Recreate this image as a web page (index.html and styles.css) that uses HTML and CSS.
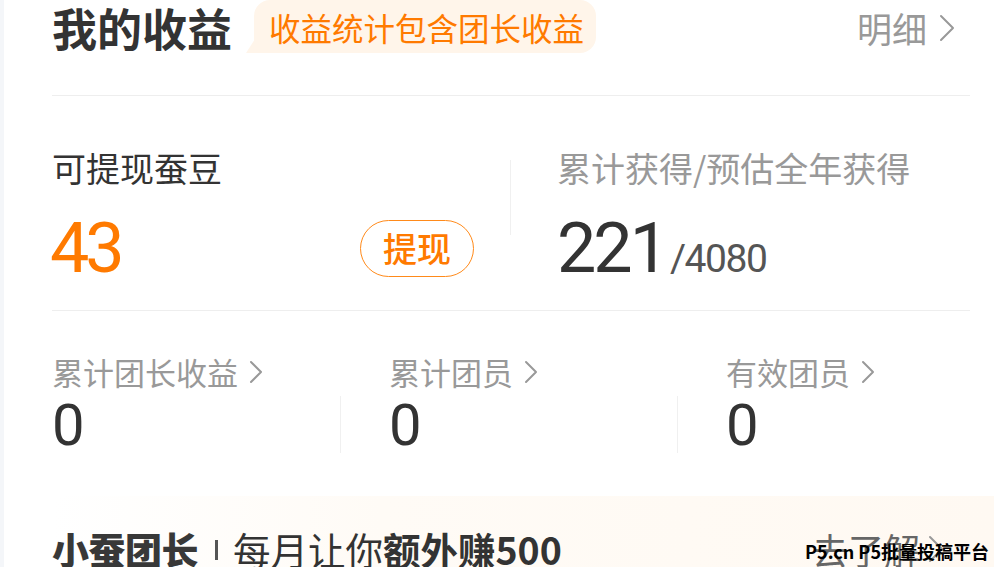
FILE: index.html
```html
<!DOCTYPE html>
<html lang="zh-CN">
<head>
<meta charset="utf-8">
<title>我的收益</title>
<link rel="stylesheet" href="styles.css">
</head>
<body>
<div class="page">
  <div class="strip"></div>
  <main class="card">
    <header class="head">
      <h1 class="title">我的收益</h1>
      <div class="tag">收益统计包含团长收益</div>
      <a class="detail">明细<svg class="chev-lg" viewBox="0 0 16 28"><path d="M2 2 L14 14 L2 26"/></svg></a>
    </header>
    <div class="rule rule-top"></div>
    <section class="stats">
      <div class="avail">
        <div class="label">可提现蚕豆</div>
        <div class="avail-row">
          <span class="big orange">43</span>
          <button class="withdraw">提现</button>
        </div>
      </div>
      <div class="vdiv"></div>
      <div class="total">
        <div class="label gray">累计获得/预估全年获得</div>
        <div class="total-row"><span class="big dark">221</span><span class="sub">/4080</span></div>
      </div>
    </section>
    <div class="rule"></div>
    <section class="team">
      <div class="col">
        <div class="col-label">累计团长收益<svg class="chev-sm" viewBox="0 0 14 24"><path d="M2 2 L12 12 L2 22"/></svg></div>
        <div class="val bordered"><span class="zero">0</span></div>
      </div>
      <div class="col">
        <div class="col-label">累计团员<svg class="chev-sm" viewBox="0 0 14 24"><path d="M2 2 L12 12 L2 22"/></svg></div>
        <div class="val bordered"><span class="zero">0</span></div>
      </div>
      <div class="col col-last">
        <div class="col-label">有效团员<svg class="chev-sm" viewBox="0 0 14 24"><path d="M2 2 L12 12 L2 22"/></svg></div>
        <div class="val"><span class="zero">0</span></div>
      </div>
    </section>
    <section class="banner">
      <span class="logo">小蚕团长</span>
      <span class="bar"></span>
      <span class="slogan">每月让你<b>额外赚500</b></span>
      <a class="more">去了解<svg class="chev-lg" viewBox="0 0 16 28"><path d="M2 2 L14 14 L2 26"/></svg></a>
    </section>
  </main>
  <div class="watermark">P5.cn P5批量投稿平台</div>
</div>
</body>
</html>
```
FILE: styles.css
```css
* { box-sizing: border-box; }
html, body { margin: 0; padding: 0; background: #fff; }
body {
  width: 994px;
  height: 567px;
  overflow: hidden;
  font-family: "Noto Sans CJK SC", "Noto Sans", sans-serif;
  color: #333;
}
.page {
  position: relative;
  display: flex;
  width: 994px;
  height: 567px;
  overflow: hidden;
}
.strip {
  flex: none;
  width: 4px;
  background: #f4f6f9;
}
.card {
  flex: 1;
  min-width: 0;
  padding: 0 24px 0 48px;
  background: #fff;
}

/* header */
.head {
  display: flex;
  align-items: center;
  height: 56px;
}
.title {
  margin: 0;
  font-size: 45px;
  line-height: 56px;
  font-weight: 700;
  color: #333;
}
.tag {
  position: relative;
  align-self: flex-start;
  height: 53px;
  margin-left: 22px;
  padding: 0 12px 0 15px;
  background: #fff5ea;
  border-radius: 16px 16px 16px 0;
  color: #ff7a00;
  font-size: 31.5px;
  line-height: 54px;
}
.tag::before {
  content: "";
  position: absolute;
  left: -8px;
  bottom: 0;
  width: 9px;
  height: 14px;
  background: #fff5ea;
  clip-path: polygon(100% 0, 100% 100%, 0 100%);
}
.detail {
  margin-left: auto;
  margin-right: 15px;
  display: flex;
  align-items: center;
  gap: 12px;
  font-size: 35px;
  line-height: 56px;
  color: #999;
}
.chev-lg {
  width: 16px;
  height: 28px;
}
.chev-lg path, .chev-sm path {
  fill: none;
  stroke: #999;
  stroke-width: 2;
  stroke-linecap: round;
  stroke-linejoin: round;
}

.rule {
  height: 1px;
  background: #eeeeee;
}
.rule-top { margin-top: 39px; }

/* stats */
.stats {
  display: flex;
  padding: 52px 0 26px;
}
.avail {
  flex: none;
  width: 422px;
}
.label {
  font-size: 34px;
  line-height: 40px;
  color: #333;
}
.label.gray { color: #999; }
.avail-row {
  display: flex;
  align-items: center;
  justify-content: space-between;
  margin-top: 24px;
}
.big {
  font-family: Roboto, "Noto Sans", sans-serif;
  font-size: 72px;
  line-height: 72px;
  font-weight: 400;
}
.orange { color: #ff7a00; font-size: 70px; letter-spacing: -4px; margin-left: -2px; }
.dark { color: #333; font-size: 70px; letter-spacing: -3px; }
.withdraw {
  width: 114px;
  height: 57px;
  padding: 0;
  border: 1.5px solid #ff8a1a;
  border-radius: 29px;
  background: transparent;
  color: #ff7a00;
  font-family: "Noto Sans CJK SC", sans-serif;
  font-size: 34px;
  font-weight: 500;
  line-height: 54px;
}
.vdiv {
  flex: none;
  width: 1px;
  height: 75px;
  margin: 12px 0 0 36px;
  background: #f0f0f0;
}
.total {
  padding-left: 46px;
}
.total-row {
  display: flex;
  align-items: baseline;
  margin-top: 24px;
}
.sub {
  margin-left: 4px;
  font-family: Roboto, "Noto Sans", sans-serif;
  font-size: 39px;
  color: #555;
  letter-spacing: -1.5px;
}

/* team */
.team {
  display: flex;
  padding-top: 44px;
}
.col {
  flex: none;
  width: 337px;
}
.col-last {
  flex: 1;
  width: auto;
  min-width: 0;
}
.col-label {
  display: flex;
  align-items: center;
  gap: 11px;
  font-size: 31px;
  line-height: 34px;
  color: #999;
}
.chev-sm {
  width: 14px;
  height: 24px;
}
.val {
  width: 289px;
  height: 57px;
}
.val.bordered { border-right: 1px solid #f0f0f0; }
.zero {
  display: block;
  margin-top: 7px;
  font-family: Roboto, "Noto Sans", sans-serif;
  font-size: 58px;
  line-height: 58px;
  color: #333;
}

/* banner */
.banner {
  display: flex;
  align-items: flex-start;
  height: 96px;
  margin: 43px -24px 0 0;
  padding-top: 34px;
  background: linear-gradient(90deg, #ffffff 0%, #fffbf6 35%, #fff9f2 100%);
  border-radius: 16px 0 0 0;
}
.logo {
  font-size: 37px;
  line-height: 38px;
  font-weight: 900;
  color: #383838;
  letter-spacing: -0.5px;
}
.bar {
  width: 3px;
  height: 20px;
  margin: 10px 15px 0 17px;
  background: #555;
}
.slogan {
  font-size: 37.5px;
  line-height: 38px;
  color: #333;
}
.slogan b { font-weight: 700; }
.more {
  margin-left: auto;
  margin-right: 50px;
  display: flex;
  align-items: center;
  gap: 8px;
  font-size: 36px;
  line-height: 38px;
  color: #666;
}

.watermark {
  position: absolute;
  right: 5px;
  bottom: 5px;
  font-size: 18px;
  line-height: 22px;
  font-weight: 700;
  color: #000;
  font-family: "Noto Sans CJK SC", sans-serif;
}
```
